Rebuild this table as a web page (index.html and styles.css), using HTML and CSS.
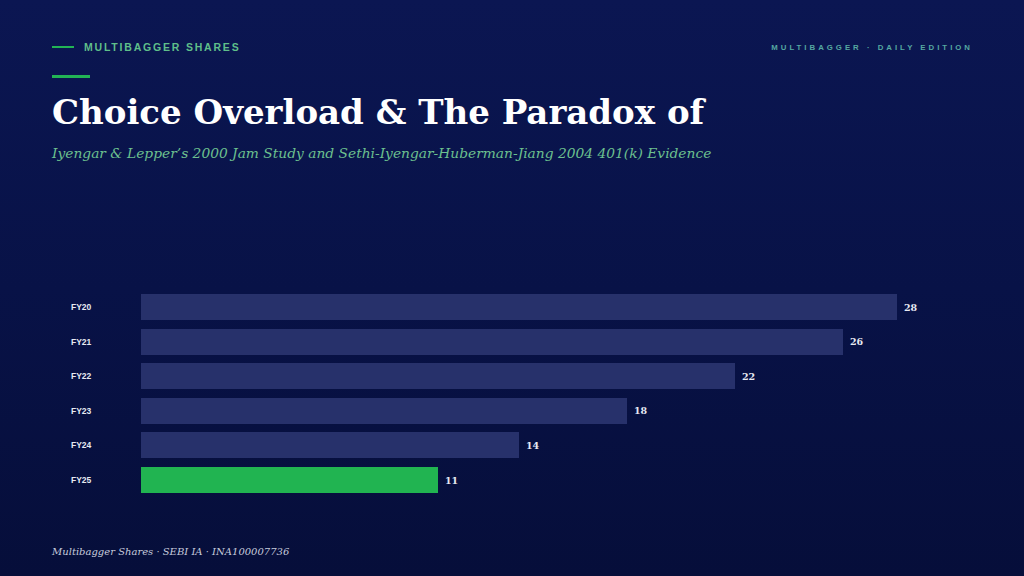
FILE: index.html
```html
<!DOCTYPE html>
<html>
<head>
<meta charset="utf-8">
<link rel="stylesheet" href="styles.css">
</head>
<body>
<div class="slide">
  <header class="top">
    <div class="brand"><span class="dash"></span><span>MULTIBAGGER SHARES</span></div>
    <div class="edition">MULTIBAGGER · DAILY EDITION</div>
  </header>
  <div class="rule"></div>
  <h1 class="title">Choice Overload &amp; The Paradox of</h1>
  <p class="subtitle">Iyengar &amp; Lepper’s 2000 Jam Study and Sethi-Iyengar-Huberman-Jiang 2004 401(k) Evidence</p>
  <div class="chart-area">
    <div class="chart">
      <div class="row"><div class="label">FY20</div><div class="track"><div class="bar" style="width:100%"></div><span class="val">28</span></div></div>
      <div class="row"><div class="label">FY21</div><div class="track"><div class="bar" style="width:92.857%"></div><span class="val">26</span></div></div>
      <div class="row"><div class="label">FY22</div><div class="track"><div class="bar" style="width:78.571%"></div><span class="val">22</span></div></div>
      <div class="row"><div class="label">FY23</div><div class="track"><div class="bar" style="width:64.286%"></div><span class="val">18</span></div></div>
      <div class="row"><div class="label">FY24</div><div class="track"><div class="bar" style="width:50%"></div><span class="val">14</span></div></div>
      <div class="row"><div class="label">FY25</div><div class="track"><div class="bar hl" style="width:39.286%"></div><span class="val">11</span></div></div>
    </div>
  </div>
  <footer class="foot">Multibagger Shares · SEBI IA · INA100007736</footer>
</div>
</body>
</html>
```
FILE: styles.css
```css
html, body {
  margin: 0;
  padding: 0;
}
body {
  width: 1024px;
  height: 576px;
  overflow: hidden;
  background: #081247;
}
.slide {
  box-sizing: border-box;
  width: 1024px;
  height: 576px;
  padding: 40px 51px 17px 52px;
  display: flex;
  flex-direction: column;
  background: linear-gradient(180deg, #0b1652 0%, #081247 50%, #060e3a 100%);
  color: #fff;
}
.top {
  display: flex;
  justify-content: space-between;
  align-items: center;
  height: 14px;
}
.brand {
  display: flex;
  align-items: center;
  gap: 10px;
  font-family: "Liberation Sans", Arial, sans-serif;
  font-weight: 700;
  font-size: 10.5px;
  letter-spacing: 1.8px;
  color: #5fbf8a;
}
.dash {
  display: block;
  width: 22px;
  height: 2px;
  background: #22b455;
}
.edition {
  font-family: "Liberation Sans", Arial, sans-serif;
  font-weight: 700;
  font-size: 7.8px;
  letter-spacing: 3px;
  color: #55a8a0;
}
.rule {
  width: 38px;
  height: 3px;
  background: #22b455;
  margin-top: 21px;
}
.title {
  margin: 12px 0 0 0;
  font-family: "DejaVu Serif", Georgia, serif;
  font-weight: 700;
  font-size: 34px;
  line-height: 44px;
  letter-spacing: 0;
  color: #ffffff;
}
.subtitle {
  margin: 10px 0 0 0;
  font-family: "DejaVu Serif", Georgia, serif;
  font-style: italic;
  font-size: 13.8px;
  line-height: 18px;
  color: #6cc08f;
}
.chart-area {
  flex: 1;
  display: flex;
  flex-direction: column;
  justify-content: flex-end;
  padding-bottom: 52px;
}
.chart {
  display: flex;
  flex-direction: column;
  gap: 8.6px;
  padding-left: 19px;
}
.row {
  display: flex;
  align-items: center;
  height: 26px;
}
.label {
  width: 70px;
  flex: none;
  font-family: "Liberation Sans", Arial, sans-serif;
  font-weight: 700;
  font-size: 8.5px;
  color: #e6e9f2;
}
.track {
  flex: none;
  width: 756px;
  display: flex;
  align-items: center;
  height: 26px;
}
.bar {
  height: 26px;
  background: #27316b;
  flex: none;
}
.bar.hl {
  background: #21b451;
}
.val {
  margin-left: 7px;
  font-family: "DejaVu Serif", Georgia, serif;
  font-weight: 700;
  font-size: 9.5px;
  color: #e6e9f2;
  white-space: nowrap;
}
.foot {
  font-family: "DejaVu Serif", Georgia, serif;
  font-style: italic;
  font-size: 10px;
  line-height: 14px;
  color: #c6cbdc;
}
```
